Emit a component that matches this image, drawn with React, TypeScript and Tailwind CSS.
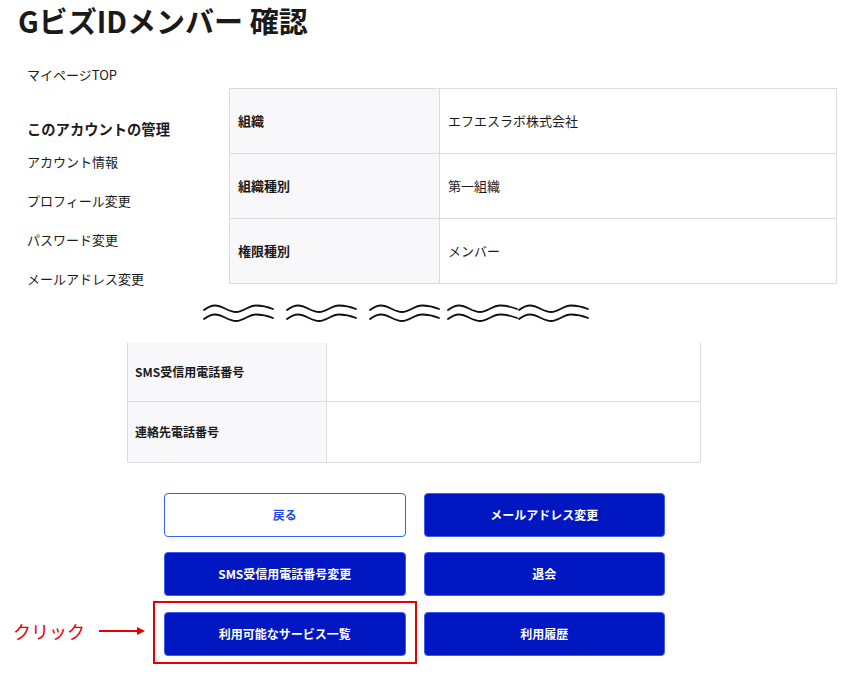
import React from 'react';

const FONT = { fontFamily: '"Noto Sans CJK JP", "Noto Sans", sans-serif' };

const sideLinks = ['アカウント情報', 'プロフィール変更', 'パスワード変更', 'メールアドレス変更'];

const orgRows = [
  { label: '組織', value: 'エフエスラボ株式会社' },
  { label: '組織種別', value: '第一組織' },
  { label: '権限種別', value: 'メンバー' },
];

const phoneRows = ['SMS受信用電話番号', '連絡先電話番号'];

// one "cut" mark: two stacked waves
const WaveGroup = () => (
  <svg width="71" height="22" viewBox="0 0 71 22" fill="none" stroke="#111" strokeWidth="1.8" strokeLinecap="round">
    <path d="M1 10 C 5 7, 8 5.5, 12 5.5 C 20 5.5, 25 12, 33 12 C 41 12, 45 5.5, 53 5.5 C 60 5.5, 65 7, 70 9" />
    <path d="M1 19 C 5 16, 8 14.5, 12 14.5 C 20 14.5, 25 21, 33 21 C 41 21, 45 14.5, 53 14.5 C 60 14.5, 65 16, 70 18" />
  </svg>
);

const PrimaryButton = ({ children }: { children: React.ReactNode }) => (
  <button
    type="button"
    className="h-[44px] w-full rounded-[4px] border border-[#3b5cf0] bg-[#0017c1] text-[12px] font-bold text-white"
  >
    {children}
  </button>
);

export default function App() {
  return (
    <div className="min-h-[685px] w-[868px] bg-white text-[#1a1a1c]" style={FONT}>
      {/* Title */}
      <h1 className="pl-[18px] text-[29px] font-bold leading-[40px] text-[#1a1a1a]">
        GビズIDメンバー 確認
      </h1>

      {/* Sidebar + organisation table */}
      <div className="mt-[22px] flex items-start">
        <nav className="w-[229px] shrink-0 pl-[27px] text-[13px]">
          <div className="leading-[26px]">マイページTOP</div>
          <div className="mt-[28px] text-[14.3px] font-bold leading-[26px]">このアカウントの管理</div>
          <ul className="mt-[7px] flex flex-col gap-[13px]">
            {sideLinks.map((l) => (
              <li key={l} className="leading-[26px]">{l}</li>
            ))}
          </ul>
        </nav>
        <table className="mt-[26px] w-[608px] border-collapse text-[13px]">
          <tbody>
            {orgRows.map((r) => (
              <tr key={r.label} className="h-[65px]">
                <th className="w-[210px] border border-[#dcdcdc] bg-[#f8f8fa] pl-[8px] text-left font-bold">
                  {r.label}
                </th>
                <td className="border border-[#dcdcdc] pl-[8px]">{r.value}</td>
              </tr>
            ))}
          </tbody>
        </table>
      </div>

      {/* Omission marks */}
      <div className="mt-[8px] flex gap-[12px] pl-[203px]">
        <WaveGroup />
        <WaveGroup />
        <WaveGroup />
        <div className="-ml-[5px] flex">
          <WaveGroup />
          <WaveGroup />
        </div>
      </div>

      {/* Phone table (cut at top) */}
      <table className="ml-[127px] mt-[21px] w-[574px] border-collapse text-[12px]">
        <tbody>
          {phoneRows.map((label, i) => (
            <tr key={label} className={i === 0 ? 'h-[58px]' : 'h-[61px]'}>
              <th
                className={`w-[199px] border border-[#dcdcdc] bg-[#f8f8fa] pl-[7px] text-left font-bold ${
                  i === 0 ? 'border-t-0' : ''
                }`}
              >
                {label}
              </th>
              <td className={`border border-[#dcdcdc] ${i === 0 ? 'border-t-0' : ''}`} />
            </tr>
          ))}
        </tbody>
      </table>

      {/* Actions */}
      <div className="ml-[164px] mt-[30px] grid w-[501px] grid-cols-2 gap-x-[18px] gap-y-[15.5px]">
        <button
          type="button"
          className="h-[44px] w-full rounded-[4px] border border-[#3460fb] bg-white text-[12px] font-bold text-[#1d48e8]"
        >
          戻る
        </button>
        <PrimaryButton>メールアドレス変更</PrimaryButton>
        <PrimaryButton>SMS受信用電話番号変更</PrimaryButton>
        <PrimaryButton>退会</PrimaryButton>
        <div className="relative">
          <PrimaryButton>利用可能なサービス一覧</PrimaryButton>
          {/* annotation */}
          <div className="pointer-events-none absolute -bottom-[8px] -left-[11px] -right-[11px] -top-[11px] border-2 border-[#e60000]" />
          <div className="pointer-events-none absolute -left-[151px] top-[6px] flex items-center">
            <span className="text-[18px] leading-[26px] text-[#e60000]">クリック</span>
            <svg className="ml-[14px]" width="47" height="10" viewBox="0 0 47 10">
              <line x1="0" y1="5" x2="40" y2="5" stroke="#e60000" strokeWidth="2" />
              <path d="M38 1 L46 5 L38 9 Z" fill="#e60000" />
            </svg>
          </div>
        </div>
        <PrimaryButton>利用履歴</PrimaryButton>
      </div>
    </div>
  );
}
